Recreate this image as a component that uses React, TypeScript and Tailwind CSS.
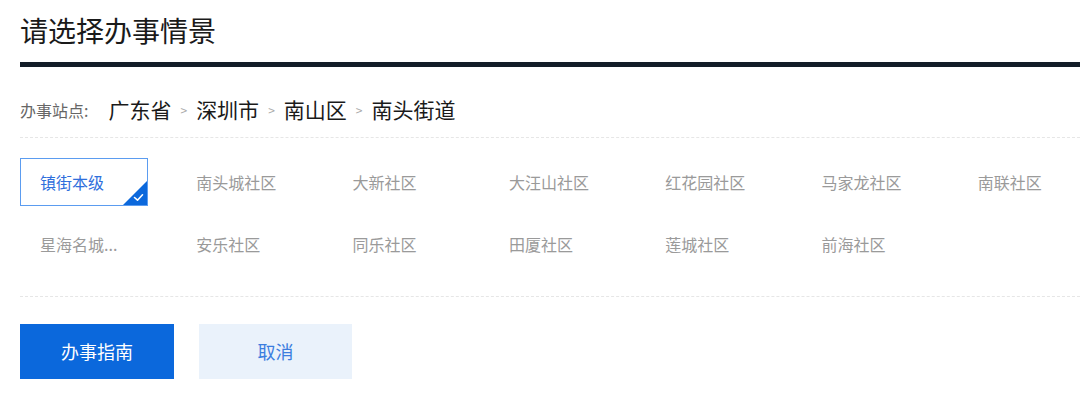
import { useState } from 'react';

const communities = [
  '镇街本级',
  '南头城社区',
  '大新社区',
  '大汪山社区',
  '红花园社区',
  '马家龙社区',
  '南联社区',
  '星海名城...',
  '安乐社区',
  '同乐社区',
  '田厦社区',
  '莲城社区',
  '前海社区',
];

const path = ['广东省', '深圳市', '南山区', '南头街道'];

function CheckCorner() {
  return (
    <svg className="absolute right-0 bottom-0" width="24" height="24" viewBox="0 0 24 24">
      <polygon points="24,0 24,24 0,24" fill="#0b68dc" />
      <path d="M11.5 16.5 L14.5 19.2 L19.5 13.8" fill="none" stroke="#fff" strokeWidth="1.6" strokeLinecap="round" strokeLinejoin="round" />
    </svg>
  );
}

export default function App() {
  const [selected, setSelected] = useState(0);

  return (
    <div
      className="w-[1080px] h-[398px] bg-white pl-5 overflow-hidden"
      style={{ fontFamily: '"Noto Sans CJK SC", "Noto Sans", sans-serif' }}
    >
      <h1 className="pt-[9px] text-[28px] leading-[42px] font-normal text-[#1a1a1a]">请选择办事情景</h1>
      <div className="mt-[11px] h-[5px] bg-[#131d28]" />

      {/* breadcrumb */}
      <div className="mt-[23px] h-[40px] flex items-center">
        <span className="text-[16px] text-[#666]">办事站点:</span>
        <div className="ml-[20px] flex items-center">
          {path.map((p, i) => (
            <div key={p} className="flex items-center">
              {i > 0 && <span className="mx-[9px] text-[12px] text-[#aaa]">&gt;</span>}
              <span className="text-[21px] text-[#1a1a1a]">{p}</span>
            </div>
          ))}
        </div>
      </div>
      <div className="mt-[7px] border-t border-dashed border-[#e6e6e6]" />

      {/* communities */}
      <div className="mt-[20px] grid grid-cols-[repeat(7,128px)] gap-x-[28.3px] gap-y-[14px]">
        {communities.map((c, i) => {
          const active = i === selected;
          return (
            <button
              key={c}
              onClick={() => setSelected(i)}
              className={`relative h-[48px] pl-[19px] text-left text-[16px] whitespace-nowrap border ${
                active ? 'border-[#5b9cf0] text-[#2f6fdc]' : 'border-transparent text-[#9a9a9a]'
              }`}
            >
              {c}
              {active && <CheckCorner />}
            </button>
          );
        })}
      </div>
      <div className="mt-[28px] border-t border-dashed border-[#e6e6e6]" />

      {/* actions */}
      <div className="mt-[27px] flex gap-[25px]">
        <button className="w-[154px] h-[55px] bg-[#0b68dc] text-white text-[18px]">办事指南</button>
        <button className="w-[153px] h-[55px] bg-[#eaf2fb] text-[#3b7ddf] text-[18px]">取消</button>
      </div>
    </div>
  );
}
